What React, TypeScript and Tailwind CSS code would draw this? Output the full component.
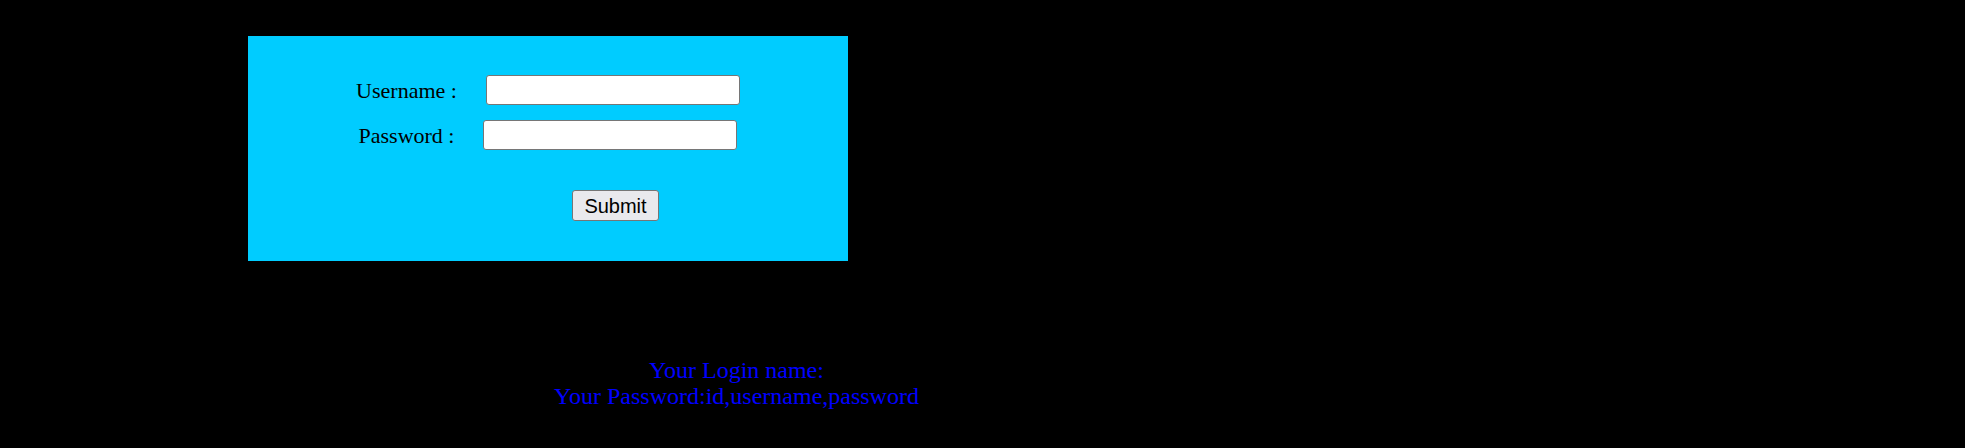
import React from 'react'

function Row({ label }: { label: string }) {
  return (
    <div className="flex items-center justify-center gap-[29px]">
      <span className="text-[22px] leading-[25px] text-black">{label}</span>
      <input
        type={label.startsWith('Pass') ? 'password' : 'text'}
        className="h-[30px] w-[254px] rounded-[3px] border border-[#767676] bg-white px-1 outline-none"
      />
    </div>
  )
}

export default function App() {
  return (
    <div className="h-[448px] w-full overflow-hidden bg-black font-['Liberation_Serif',serif]">
      <div className="pl-[248px] pt-[36px]">
        <div className="h-[225px] w-[600px] bg-[#00ccff] pt-[39px]">
          <Row label="Username :" />
          <div className="h-[15px]" />
          <Row label="Password :" />
          <div className="pl-[324px] pt-[40px]">
            <button className="h-[31px] w-[87px] rounded-[3px] border border-[#767676] bg-[#e9e9ed] font-['Liberation_Sans',Arial,sans-serif] text-[20px] leading-none text-black">
              Submit
            </button>
          </div>
        </div>
      </div>
      <div className="mt-[96px] w-[1473px] text-center text-[24px] leading-[26px] text-[#0000ff]">
        <div>Your Login name:</div>
        <div>Your Password:id,username,password</div>
      </div>
    </div>
  )
}
